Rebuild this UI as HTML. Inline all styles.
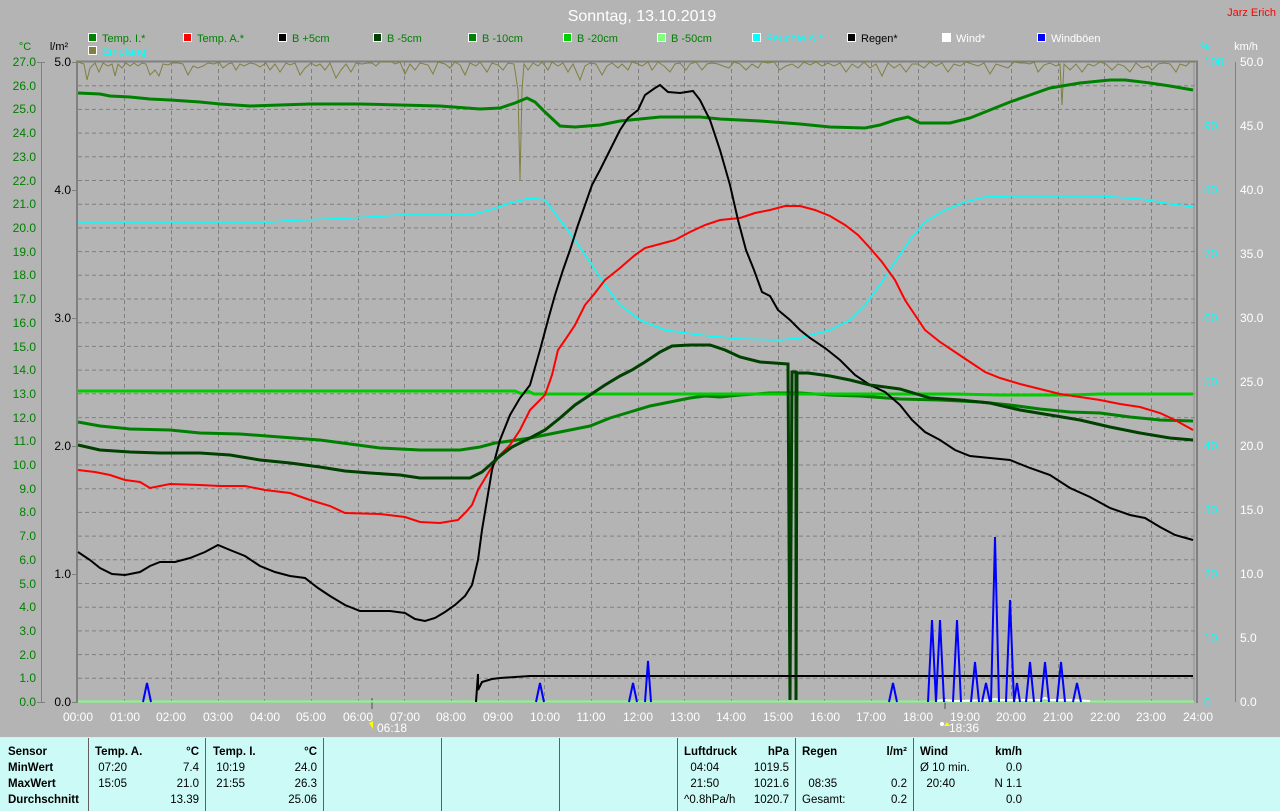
<!DOCTYPE html>
<html><head><meta charset="utf-8"><style>
html,body{margin:0;padding:0;width:1280px;height:810px;overflow:hidden;background:#b4b4b4;font-family:"Liberation Sans",sans-serif}
svg text{font-family:"Liberation Sans",sans-serif;font-size:12px}
#panel{position:absolute;left:0;top:737px;width:1280px;height:73px;background:#ccfaf6;border-top:1px solid #e8e8e8}
.c{position:absolute;top:6px;font-size:11.5px;line-height:16px;color:#000}
.c b{font-weight:bold}
.d{position:absolute;top:0;width:1px;height:73px;background:#606060}
.r{text-align:right}
</style></head><body>
<svg width="1280" height="737" style="position:absolute;left:0;top:0">
<text x="642" y="21" fill="#fff" font-size="16" text-anchor="middle" style="font-size:16px">Sonntag, 13.10.2019</text>
<text x="1276" y="16" fill="#f00" text-anchor="end" style="font-size:11px">Jarz Erich</text>
<g style="font-size:11px">
<rect x="88.5" y="33.5" width="8" height="8" fill="#008000" stroke="#fff"/><text x="102" y="42" fill="#008000" style="font-size:11px">Temp. I.*</text>
<rect x="183.5" y="33.5" width="8" height="8" fill="#f00" stroke="#fff"/><text x="197" y="42" fill="#008000" style="font-size:11px">Temp. A.*</text>
<rect x="278.5" y="33.5" width="8" height="8" fill="#000" stroke="#fff"/><text x="292" y="42" fill="#008000" style="font-size:11px">B +5cm</text>
<rect x="373.5" y="33.5" width="8" height="8" fill="#004000" stroke="#fff"/><text x="387" y="42" fill="#008000" style="font-size:11px">B -5cm</text>
<rect x="468.5" y="33.5" width="8" height="8" fill="#008000" stroke="#fff"/><text x="482" y="42" fill="#008000" style="font-size:11px">B -10cm</text>
<rect x="563.5" y="33.5" width="8" height="8" fill="#00d000" stroke="#fff"/><text x="577" y="42" fill="#008000" style="font-size:11px">B -20cm</text>
<rect x="657.5" y="33.5" width="8" height="8" fill="#80ff80" stroke="#fff"/><text x="671" y="42" fill="#008000" style="font-size:11px">B -50cm</text>
<rect x="752.5" y="33.5" width="8" height="8" fill="#0ff" stroke="#fff"/><text x="766" y="42" fill="#0ff" style="font-size:11px">Feuchte A.*</text>
<rect x="847.5" y="33.5" width="8" height="8" fill="#000" stroke="#fff"/><text x="861" y="42" fill="#000" style="font-size:11px">Regen*</text>
<rect x="942.5" y="33.5" width="8" height="8" fill="#fff" stroke="#fff"/><text x="956" y="42" fill="#fff" style="font-size:11px">Wind*</text>
<rect x="1037.5" y="33.5" width="8" height="8" fill="#00f" stroke="#fff"/><text x="1051" y="42" fill="#fff" style="font-size:11px">Windböen</text>
<rect x="88.5" y="46.5" width="8" height="8" fill="#808040" stroke="#fff"/><text x="102" y="55" fill="#0ff" style="font-size:11px">Empfang</text>
</g>
<text x="25" y="50" fill="#008000" style="font-size:11px" text-anchor="middle">°C</text>
<text x="59" y="50" fill="#000" style="font-size:11px" text-anchor="middle">l/m²</text>
<text x="1205" y="50" fill="#0ff" style="font-size:11px" text-anchor="middle">%</text>
<text x="1246" y="50" fill="#fff" style="font-size:11px" text-anchor="middle">km/h</text>
<line x1="41.5" y1="62" x2="41.5" y2="702" stroke="#808080"/>
<line x1="1235.5" y1="62" x2="1235.5" y2="702" stroke="#808080"/>
<g id="grid" stroke="#808080" stroke-dasharray="4,3">
<line x1="78" x2="1196" y1="85.7" y2="85.7"/><line x1="78" x2="1196" y1="109.4" y2="109.4"/><line x1="78" x2="1196" y1="133.1" y2="133.1"/><line x1="78" x2="1196" y1="156.8" y2="156.8"/><line x1="78" x2="1196" y1="180.5" y2="180.5"/><line x1="78" x2="1196" y1="204.2" y2="204.2"/><line x1="78" x2="1196" y1="227.9" y2="227.9"/><line x1="78" x2="1196" y1="251.6" y2="251.6"/><line x1="78" x2="1196" y1="275.3" y2="275.3"/><line x1="78" x2="1196" y1="299" y2="299"/><line x1="78" x2="1196" y1="322.7" y2="322.7"/><line x1="78" x2="1196" y1="346.4" y2="346.4"/><line x1="78" x2="1196" y1="370.1" y2="370.1"/><line x1="78" x2="1196" y1="393.8" y2="393.8"/><line x1="78" x2="1196" y1="417.6" y2="417.6"/><line x1="78" x2="1196" y1="441.3" y2="441.3"/><line x1="78" x2="1196" y1="465" y2="465"/><line x1="78" x2="1196" y1="488.7" y2="488.7"/><line x1="78" x2="1196" y1="512.4" y2="512.4"/><line x1="78" x2="1196" y1="536.1" y2="536.1"/><line x1="78" x2="1196" y1="559.8" y2="559.8"/><line x1="78" x2="1196" y1="583.5" y2="583.5"/><line x1="78" x2="1196" y1="607.2" y2="607.2"/><line x1="78" x2="1196" y1="630.9" y2="630.9"/><line x1="78" x2="1196" y1="654.6" y2="654.6"/><line x1="78" x2="1196" y1="678.3" y2="678.3"/>
<line y1="62" y2="702" x1="124.5" x2="124.5"/><line y1="62" y2="702" x1="171.5" x2="171.5"/><line y1="62" y2="702" x1="218.5" x2="218.5"/><line y1="62" y2="702" x1="264.5" x2="264.5"/><line y1="62" y2="702" x1="311.5" x2="311.5"/><line y1="62" y2="702" x1="358.5" x2="358.5"/><line y1="62" y2="702" x1="404.5" x2="404.5"/><line y1="62" y2="702" x1="451.5" x2="451.5"/><line y1="62" y2="702" x1="498.5" x2="498.5"/><line y1="62" y2="702" x1="544.5" x2="544.5"/><line y1="62" y2="702" x1="591.5" x2="591.5"/><line y1="62" y2="702" x1="638.5" x2="638.5"/><line y1="62" y2="702" x1="684.5" x2="684.5"/><line y1="62" y2="702" x1="731.5" x2="731.5"/><line y1="62" y2="702" x1="778.5" x2="778.5"/><line y1="62" y2="702" x1="824.5" x2="824.5"/><line y1="62" y2="702" x1="871.5" x2="871.5"/><line y1="62" y2="702" x1="918.5" x2="918.5"/><line y1="62" y2="702" x1="964.5" x2="964.5"/><line y1="62" y2="702" x1="1011.5" x2="1011.5"/><line y1="62" y2="702" x1="1058.5" x2="1058.5"/><line y1="62" y2="702" x1="1104.5" x2="1104.5"/><line y1="62" y2="702" x1="1151.5" x2="1151.5"/>
</g>
<line x1="77" y1="61" x2="77" y2="703" stroke="#808080" stroke-width="2"/>
<line x1="76" y1="61.5" x2="1198" y2="61.5" stroke="#808080" stroke-width="2"/>
<line x1="1197" y1="61" x2="1197" y2="703" stroke="#808080" stroke-width="2"/>
<line x1="1194" y1="62" x2="1194" y2="702" stroke="#909090" stroke-width="1"/>
<g fill="#008000" text-anchor="end" style="font-size:11px">
<text x="36" y="66">27.0</text><text x="36" y="90">26.0</text><text x="36" y="113">25.0</text><text x="36" y="137">24.0</text><text x="36" y="161">23.0</text><text x="36" y="185">22.0</text><text x="36" y="208">21.0</text><text x="36" y="232">20.0</text><text x="36" y="256">19.0</text><text x="36" y="279">18.0</text><text x="36" y="303">17.0</text><text x="36" y="327">16.0</text><text x="36" y="351">15.0</text><text x="36" y="374">14.0</text><text x="36" y="398">13.0</text><text x="36" y="422">12.0</text><text x="36" y="445">11.0</text><text x="36" y="469">10.0</text><text x="36" y="493">9.0</text><text x="36" y="516">8.0</text><text x="36" y="540">7.0</text><text x="36" y="564">6.0</text><text x="36" y="588">5.0</text><text x="36" y="611">4.0</text><text x="36" y="635">3.0</text><text x="36" y="659">2.0</text><text x="36" y="682">1.0</text><text x="36" y="706">0.0</text>
</g>
<g stroke="#808080"><line x1="37" x2="45" y1="62.5" y2="62.5"/><line x1="37" x2="45" y1="702.5" y2="702.5"/><line x1="72" x2="76" y1="62.5" y2="62.5"/><line x1="72" x2="76" y1="190.5" y2="190.5"/><line x1="72" x2="76" y1="318.5" y2="318.5"/><line x1="72" x2="76" y1="446.5" y2="446.5"/><line x1="72" x2="76" y1="574.5" y2="574.5"/><line x1="72" x2="76" y1="702.5" y2="702.5"/></g>
<g fill="#000" text-anchor="end" style="font-size:11px">
<text x="71" y="66">5.0</text><text x="71" y="194">4.0</text><text x="71" y="322">3.0</text><text x="71" y="450">2.0</text><text x="71" y="578">1.0</text><text x="71" y="706">0.0</text>
</g>
<g fill="#0ff" style="font-size:11px">
<text x="1204" y="66">100</text><text x="1204" y="130">90</text><text x="1204" y="194">80</text><text x="1204" y="258">70</text><text x="1204" y="322">60</text><text x="1204" y="386">50</text><text x="1204" y="450">40</text><text x="1204" y="514">30</text><text x="1204" y="578">20</text><text x="1204" y="642">10</text><text x="1204" y="706">0</text>
</g>
<g fill="#fff" style="font-size:11px">
<text x="1240" y="66">50.0</text><text x="1240" y="130">45.0</text><text x="1240" y="194">40.0</text><text x="1240" y="258">35.0</text><text x="1240" y="322">30.0</text><text x="1240" y="386">25.0</text><text x="1240" y="450">20.0</text><text x="1240" y="514">15.0</text><text x="1240" y="578">10.0</text><text x="1240" y="642">5.0</text><text x="1240" y="706">0.0</text>
</g>
<g fill="#fff" text-anchor="middle" style="font-size:11px">
<text x="78" y="721">00:00</text><text x="125" y="721">01:00</text><text x="171" y="721">02:00</text><text x="218" y="721">03:00</text><text x="265" y="721">04:00</text><text x="311" y="721">05:00</text><text x="358" y="721">06:00</text><text x="405" y="721">07:00</text><text x="451" y="721">08:00</text><text x="498" y="721">09:00</text><text x="545" y="721">10:00</text><text x="591" y="721">11:00</text><text x="638" y="721">12:00</text><text x="685" y="721">13:00</text><text x="731" y="721">14:00</text><text x="778" y="721">15:00</text><text x="825" y="721">16:00</text><text x="871" y="721">17:00</text><text x="918" y="721">18:00</text><text x="965" y="721">19:00</text><text x="1011" y="721">20:00</text><text x="1058" y="721">21:00</text><text x="1105" y="721">22:00</text><text x="1151" y="721">23:00</text><text x="1198" y="721">24:00</text>
<text x="392" y="732">06:18</text><text x="964" y="732">18:36</text>
</g>
<line x1="372" y1="698" x2="372" y2="709" stroke="#808080" stroke-width="2"/>
<line x1="945" y1="698" x2="945" y2="709" stroke="#808080" stroke-width="2"/>
<path d="M369 723 l4 -2 l0 8z" fill="#ff0"/><path d="M944 726 l3 -4 l3 4z" fill="#ff0"/><circle cx="942" cy="724" r="2" fill="#fff"/>
<line x1="78" y1="701.5" x2="1194" y2="701.5" stroke="#80ff80" stroke-width="2"/>
<polyline fill="none" stroke="#808040" stroke-width="1" points="78,62 84,64 87,80 90,68 95,63 99,72 103,63 108,66 112,64 115,76 118,64 122,68 126,63 130,66 134,63 138,66 142,63 146,64 150,75 155,70 159,76 163,64 168,65 172,63 178,63 183,64 188,75 193,66 198,68 203,66 208,63 214,64 219,62 223,68 228,64 232,63 236,70 240,64 244,66 250,63 255,64 260,67 266,63 270,70 275,64 280,72 286,63 290,65 295,63 300,75 305,68 311,63 316,66 320,64 325,70 330,63 336,78 341,70 346,64 351,72 356,63 362,64 368,63 372,63 376,66 380,62 392,62 395,64 400,62 405,74 410,64 415,70 420,63 428,65 433,74 438,62 445,64 450,68 455,62 460,65 465,75 470,63 476,66 480,62 487,72 492,63 498,65 503,70 508,63 514,64 518,90 520,180 522,90 524,64 528,70 533,63 538,66 542,62 548,70 552,62 558,66 563,63 568,72 573,64 580,80 585,66 590,63 596,64 602,75 607,66 612,63 618,68 622,64 628,70 632,62 638,64 642,66 648,62 652,70 658,62 664,66 670,72 675,64 680,63 686,70 690,64 696,62 702,70 707,64 712,63 718,64 723,66 729,68 734,62 740,64 746,70 752,64 758,68 762,62 768,63 774,62 780,70 786,66 792,64 798,68 804,62 810,65 816,62 822,66 828,63 834,66 840,63 846,72 852,64 858,68 864,62 870,68 876,64 882,76 888,63 894,68 900,64 906,72 912,64 918,64 924,68 930,62 936,66 942,63 948,72 954,64 960,66 966,62 972,64 978,66 984,63 990,74 996,64 1002,66 1008,68 1014,62 1020,63 1025,63 1030,64 1034,62 1038,72 1044,65 1050,63 1056,66 1060,64 1062,105 1064,64 1070,70 1076,64 1082,72 1088,64 1094,66 1100,62 1106,64 1112,70 1118,64 1124,66 1130,72 1136,63 1142,68 1148,66 1152,70 1158,64 1164,63 1170,64 1176,72 1180,64 1186,66 1190,62 1194,62"/>
<polyline fill="none" stroke="#008000" stroke-width="3" points="78,93 100,94 110,96 130,97 150,99 170,100 200,102 220,104 250,106 280,105 310,104 360,104 400,105 440,106 480,109 500,108 515,103 527,98 535,102 545,112 560,126 575,127 600,125 620,121 640,119 660,117 700,117 720,119 760,121 800,124 830,127 865,128 880,125 895,120 908,117 920,123 950,123 970,118 990,110 1010,102 1030,95 1050,88 1080,83 1110,80 1125,80 1150,83 1170,86 1193,90"/>
<polyline fill="none" stroke="#0ff" stroke-width="1.5" points="78,222 270,222 300,220 330,219 370,217 400,215 470,215 490,210 510,203 530,198 545,200 560,220 575,240 590,262 605,285 620,305 640,320 665,330 700,335 740,339 780,340 800,338 830,330 850,320 865,305 880,285 895,262 910,240 925,222 945,210 965,202 985,197 1010,196 1100,196 1140,199 1165,203 1193,207"/>
<polyline fill="none" stroke="#008000" stroke-width="3" points="78,422 100,426 130,429 170,430 200,433 240,434 280,437 320,440 350,444 380,448 420,450 460,450 480,447 495,443 510,441 530,438 550,434 570,430 590,426 610,418 630,412 650,406 670,402 690,398 705,396 720,397 740,395 770,393 800,393 830,395 860,396 900,399 940,400 980,402 1010,405 1040,409 1070,412 1100,413 1130,417 1160,420 1193,421"/>
<polyline fill="none" stroke="#00cc00" stroke-width="3" points="78,391 515,391 522,394 528,391 534,394 600,394 900,394 930,394 955,394 1000,395 1070,395 1100,394 1193,394"/>
<polyline fill="none" stroke="#f00" stroke-width="2" points="78,470 95,472 110,475 125,480 140,482 150,488 170,484 200,485 220,486 245,486 265,490 290,493 310,500 330,506 345,513 380,514 405,517 420,522 440,523 458,520 466,512 472,505 478,490 484,480 490,470 500,455 510,445 520,430 530,410 545,395 552,375 558,350 565,340 575,325 585,305 595,293 605,280 620,268 635,255 645,248 660,244 675,240 690,232 705,225 720,220 740,218 755,213 770,210 785,206 800,206 815,210 830,216 845,225 858,235 870,248 882,262 895,280 905,300 915,315 925,330 940,342 955,352 970,362 985,372 1000,378 1020,384 1040,389 1060,394 1080,397 1100,400 1120,404 1140,407 1160,413 1175,420 1193,430"/>
<polyline fill="none" stroke="#000" stroke-width="2" points="78,552 90,560 100,568 112,574 125,575 140,572 150,566 160,562 175,562 190,558 205,552 218,545 230,550 245,556 260,566 275,572 290,576 305,578 318,588 330,596 345,605 360,611 390,611 405,613 415,619 425,621 435,618 445,612 455,605 465,596 472,585 478,560 482,530 487,500 492,470 500,440 510,415 520,398 530,385 540,350 548,320 555,295 563,270 570,250 578,225 585,205 592,185 600,170 610,150 620,130 628,118 638,110 645,95 655,88 660,85 668,92 680,93 693,91 700,100 710,120 720,150 730,185 738,220 746,250 754,270 762,292 770,296 778,310 790,320 800,330 810,338 825,348 840,360 855,375 870,385 885,392 900,405 912,420 925,432 940,440 955,450 970,456 990,458 1010,460 1030,468 1050,475 1070,488 1090,497 1110,508 1130,515 1145,518 1160,527 1175,535 1193,540"/>
<polyline fill="none" stroke="#004000" stroke-width="3" points="78,445 100,450 130,452 160,453 200,453 230,455 260,460 290,463 320,467 345,471 370,473 400,475 420,478 470,478 482,472 490,465 500,456 512,447 530,438 545,430 560,418 575,405 590,395 605,385 620,376 632,370 645,362 660,352 672,346 690,345 710,345 725,350 740,357 760,362 788,364 790,700 792,372 796,372 796,700 797,373 808,373 830,376 850,380 870,385 900,389 930,398 960,400 990,403 1020,410 1050,415 1080,420 1110,427 1140,433 1170,438 1193,440"/>
<polyline fill="none" stroke="#000" stroke-width="2" points="476,702 478,674 478,690 482,682 492,679 500,678 515,677 530,676 545,676 1193,676"/>
<polyline fill="none" stroke="#fff" stroke-width="2" points="935,701 945,700 955,701 990,700 995,699 1000,700 1040,700 1045,698 1050,700 1070,700 1090,701"/>
<g fill="none" stroke="#00f" stroke-width="2">
<polyline points="143,702 147,683 151,702"/>
<polyline points="536,702 540,683 544,702"/>
<polyline points="629,702 633,683 637,702"/>
<polyline points="645,702 648,661 651,702"/>
<polyline points="889,702 893,683 897,702"/>
<polyline points="928,702 932,620 936,702 940,620 944,702"/>
<polyline points="953,702 957,620 961,702"/>
<polyline points="971,702 975,662 979,702"/>
<polyline points="982,702 986,683 990,702"/>
<polyline points="991,702 995,537 999,702"/>
<polyline points="1006,702 1010,600 1014,702 1017,683 1020,702"/>
<polyline points="1026,702 1030,662 1034,702"/>
<polyline points="1041,702 1045,662 1049,702"/>
<polyline points="1057,702 1061,662 1065,702"/>
<polyline points="1073,702 1077,683 1081,702"/>
</g>
</svg>
<div id="panel">
<div class="d" style="left:88px"></div><div class="d" style="left:205px"></div><div class="d" style="left:323px"></div><div class="d" style="left:441px"></div><div class="d" style="left:559px"></div><div class="d" style="left:677px"></div><div class="d" style="left:795px"></div><div class="d" style="left:913px"></div>
<div class="c" style="left:8px"><b>Sensor</b><br><b>MinWert</b><br><b>MaxWert</b><br><b>Durchschnitt</b></div>
<div class="c" style="left:95px"><b>Temp. A.</b><br>&nbsp;07:20<br>&nbsp;15:05<br>&nbsp;</div>
<div class="c r" style="left:150px;width:49px"><b>°C</b><br>7.4<br>21.0<br>13.39</div>
<div class="c" style="left:213px"><b>Temp. I.</b><br>&nbsp;10:19<br>&nbsp;21:55<br>&nbsp;</div>
<div class="c r" style="left:268px;width:49px"><b>°C</b><br>24.0<br>26.3<br>25.06</div>
<div class="c" style="left:684px"><b>Luftdruck</b><br>&nbsp;&nbsp;04:04<br>&nbsp;&nbsp;21:50<br>^0.8hPa/h</div>
<div class="c r" style="left:730px;width:59px"><b>hPa</b><br>1019.5<br>1021.6<br>1020.7</div>
<div class="c" style="left:802px"><b>Regen</b><br>&nbsp;<br>&nbsp;&nbsp;08:35<br>Gesamt:</div>
<div class="c r" style="left:850px;width:57px"><b>l/m²</b><br>&nbsp;<br>0.2<br>0.2</div>
<div class="c" style="left:920px"><b>Wind</b><br>Ø 10 min.<br>&nbsp;&nbsp;20:40<br>&nbsp;</div>
<div class="c r" style="left:970px;width:52px"><b>km/h</b><br>0.0<br>N 1.1<br>0.0</div>
</div>
</body></html>
